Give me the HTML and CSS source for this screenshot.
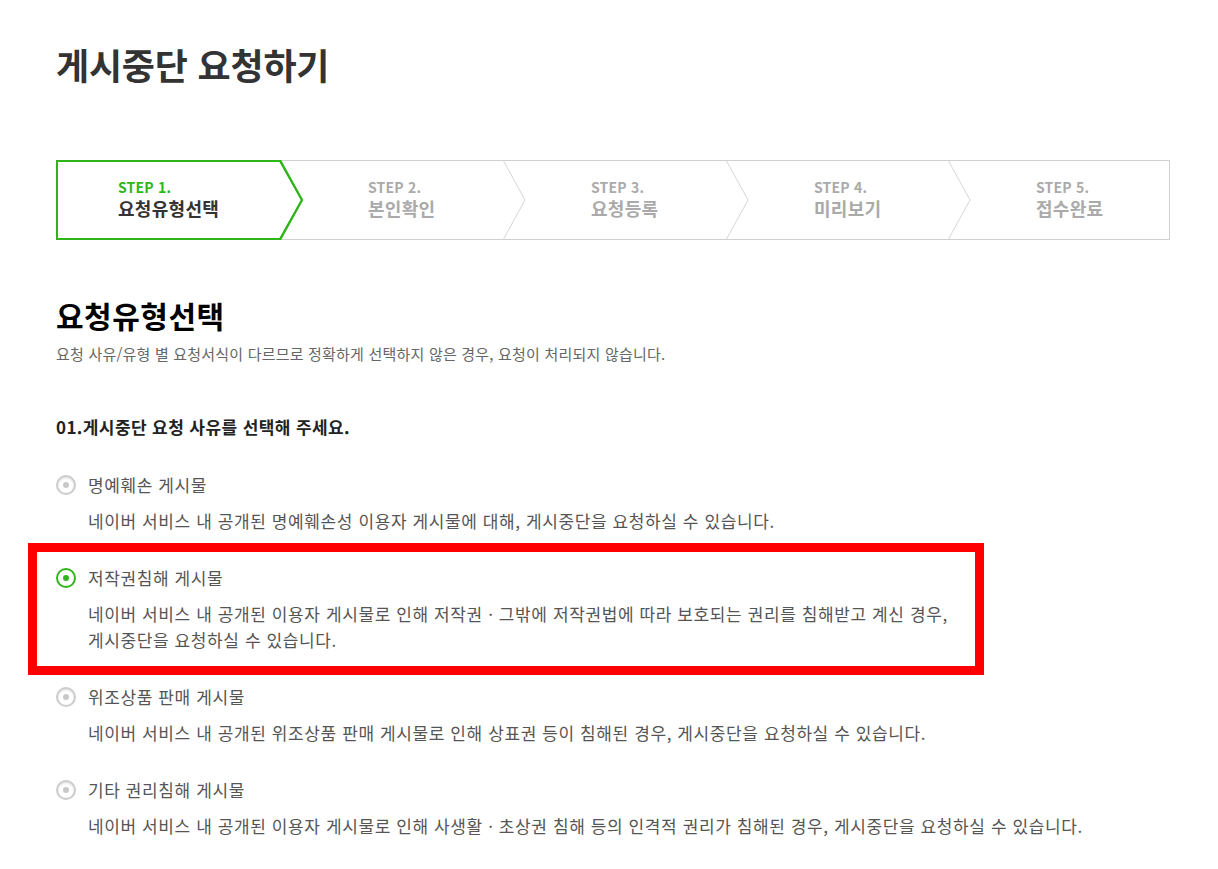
FILE: index.html
```html
<!DOCTYPE html>
<html lang="ko">
<head>
    <meta charset="UTF-8">
    <meta name="viewport" content="width=device-width, initial-scale=1.0">
    <title>게시중단 요청하기</title>
    <link rel="stylesheet" href="styles.css">
</head>
<body>
    <div class="page">
        <h1 class="page-title">게시중단 요청하기</h1>

        <div class="steps">
            <svg class="steps-frame" width="1114" height="80" viewBox="0 0 1114 80">
                <rect x="0.5" y="0.5" width="1113" height="79" fill="none" stroke="#cfcfcf"/>
                <path d="M447 0 L469 40 L447 80" fill="none" stroke="#d6d6d6"/>
                <path d="M670 0 L692 40 L670 80" fill="none" stroke="#d6d6d6"/>
                <path d="M892 0 L914 40 L892 80" fill="none" stroke="#d6d6d6"/>
                <path d="M1 1 L224 1 L246 40 L224 79 L1 79 Z" fill="#fff" stroke="#2fb51a" stroke-width="2"/>
                <path d="M246 40 L224 0 M246 40 L224 80" fill="none" stroke="#2fb51a" stroke-width="2"/>
            </svg>
            <div class="step active">
                <span class="step-num">STEP 1.</span>
                <span class="step-name">요청유형선택</span>
            </div>
            <div class="step">
                <span class="step-num">STEP 2.</span>
                <span class="step-name">본인확인</span>
            </div>
            <div class="step">
                <span class="step-num">STEP 3.</span>
                <span class="step-name">요청등록</span>
            </div>
            <div class="step">
                <span class="step-num">STEP 4.</span>
                <span class="step-name">미리보기</span>
            </div>
            <div class="step">
                <span class="step-num">STEP 5.</span>
                <span class="step-name">접수완료</span>
            </div>
        </div>

        <h2 class="section-title">요청유형선택</h2>
        <p class="section-desc">요청 사유/유형 별 요청서식이 다르므로 정확하게 선택하지 않은 경우, 요청이 처리되지 않습니다.</p>

        <h3 class="question">01.게시중단 요청 사유를 선택해 주세요.</h3>

        <div class="options">
            <div class="option">
                <label class="option-label"><span class="radio"></span>명예훼손 게시물</label>
                <p class="option-desc">네이버 서비스 내 공개된 명예훼손성 이용자 게시물에 대해, 게시중단을 요청하실 수 있습니다.</p>
            </div>
            <div class="option marked">
                <label class="option-label"><span class="radio checked"></span>저작권침해 게시물</label>
                <p class="option-desc">네이버 서비스 내 공개된 이용자 게시물로 인해 저작권 · 그밖에 저작권법에 따라 보호되는 권리를 침해받고 계신 경우,<br>게시중단을 요청하실 수 있습니다.</p>
            </div>
            <div class="option">
                <label class="option-label"><span class="radio"></span>위조상품 판매 게시물</label>
                <p class="option-desc">네이버 서비스 내 공개된 위조상품 판매 게시물로 인해 상표권 등이 침해된 경우, 게시중단을 요청하실 수 있습니다.</p>
            </div>
            <div class="option">
                <label class="option-label"><span class="radio"></span>기타 권리침해 게시물</label>
                <p class="option-desc">네이버 서비스 내 공개된 이용자 게시물로 인해 사생활 · 초상권 침해 등의 인격적 권리가 침해된 경우, 게시중단을 요청하실 수 있습니다.</p>
            </div>
        </div>
    </div>
</body>
</html>
```

FILE: styles.css
```css
body {
    margin: 0;
    font-family: "Noto Sans CJK KR", "Noto Sans", sans-serif;
    color: #333;
    background: #fff;
}
.page {
    width: 1114px;
    padding: 44px 0 0 56px;
}
.page-title {
    margin: 0;
    font-size: 36px;
    line-height: 40px;
    font-weight: bold;
    letter-spacing: -0.2px;
    color: #333;
}
.steps {
    position: relative;
    display: grid;
    grid-template-columns: 246px 223px 223px 222px 1fr;
    height: 80px;
    margin-top: 76px;
}
.steps-frame {
    position: absolute;
    left: 0;
    top: 0;
}
.step {
    position: relative;
    display: flex;
    flex-direction: column;
    justify-content: center;
    padding-left: 66px;
    padding-bottom: 2px;
    color: #aaa;
}
.step.active {
    padding-left: 62px;
}
.step-num {
    font-size: 14px;
    line-height: 18px;
    font-weight: bold;
    letter-spacing: 0.2px;
}
.step-name {
    font-size: 18px;
    line-height: 24px;
    font-weight: bold;
    letter-spacing: 0.3px;
}
.step.active .step-num {
    color: #2fb51a;
}
.step.active .step-name {
    color: #333;
}
.section-title {
    margin: 57px 0 0;
    font-size: 30px;
    line-height: 36px;
    font-weight: bold;
    letter-spacing: 0.5px;
    color: #000;
}
.section-desc {
    margin: 11px 0 0;
    font-size: 15px;
    line-height: 20px;
    letter-spacing: 0.2px;
    color: #666;
}
.question {
    margin: 51px 0 0;
    font-size: 17px;
    line-height: 24px;
    font-weight: bold;
    letter-spacing: 0.4px;
    color: #222;
}
.option {
    position: relative;
    margin-top: 31px;
}
.option:first-child {
    margin-top: 33px;
}
.option.marked::after {
    content: "";
    position: absolute;
    left: -28px;
    right: 186px;
    top: -22px;
    bottom: -22px;
    border: 9px solid #ff0000;
}
.option-label {
    display: flex;
    align-items: center;
    gap: 12px;
    font-size: 17px;
    line-height: 26px;
    letter-spacing: 0.6px;
    color: #555;
}
.radio {
    position: relative;
    width: 16px;
    height: 16px;
    border: 2px solid #ccc;
    border-radius: 50%;
    box-shadow: inset 0 1px 2px rgba(0, 0, 0, 0.15);
}
.radio::after {
    content: "";
    position: absolute;
    left: 5px;
    top: 5px;
    width: 6px;
    height: 6px;
    border-radius: 50%;
    background: #c8c8c8;
}
.radio.checked {
    border-color: #2fb51a;
    box-shadow: none;
}
.radio.checked::after {
    background: #2fb51a;
}
.option-desc {
    margin: 10px 0 0 32px;
    font-size: 17px;
    line-height: 26px;
    letter-spacing: 0.6px;
    color: #555;
}
```
